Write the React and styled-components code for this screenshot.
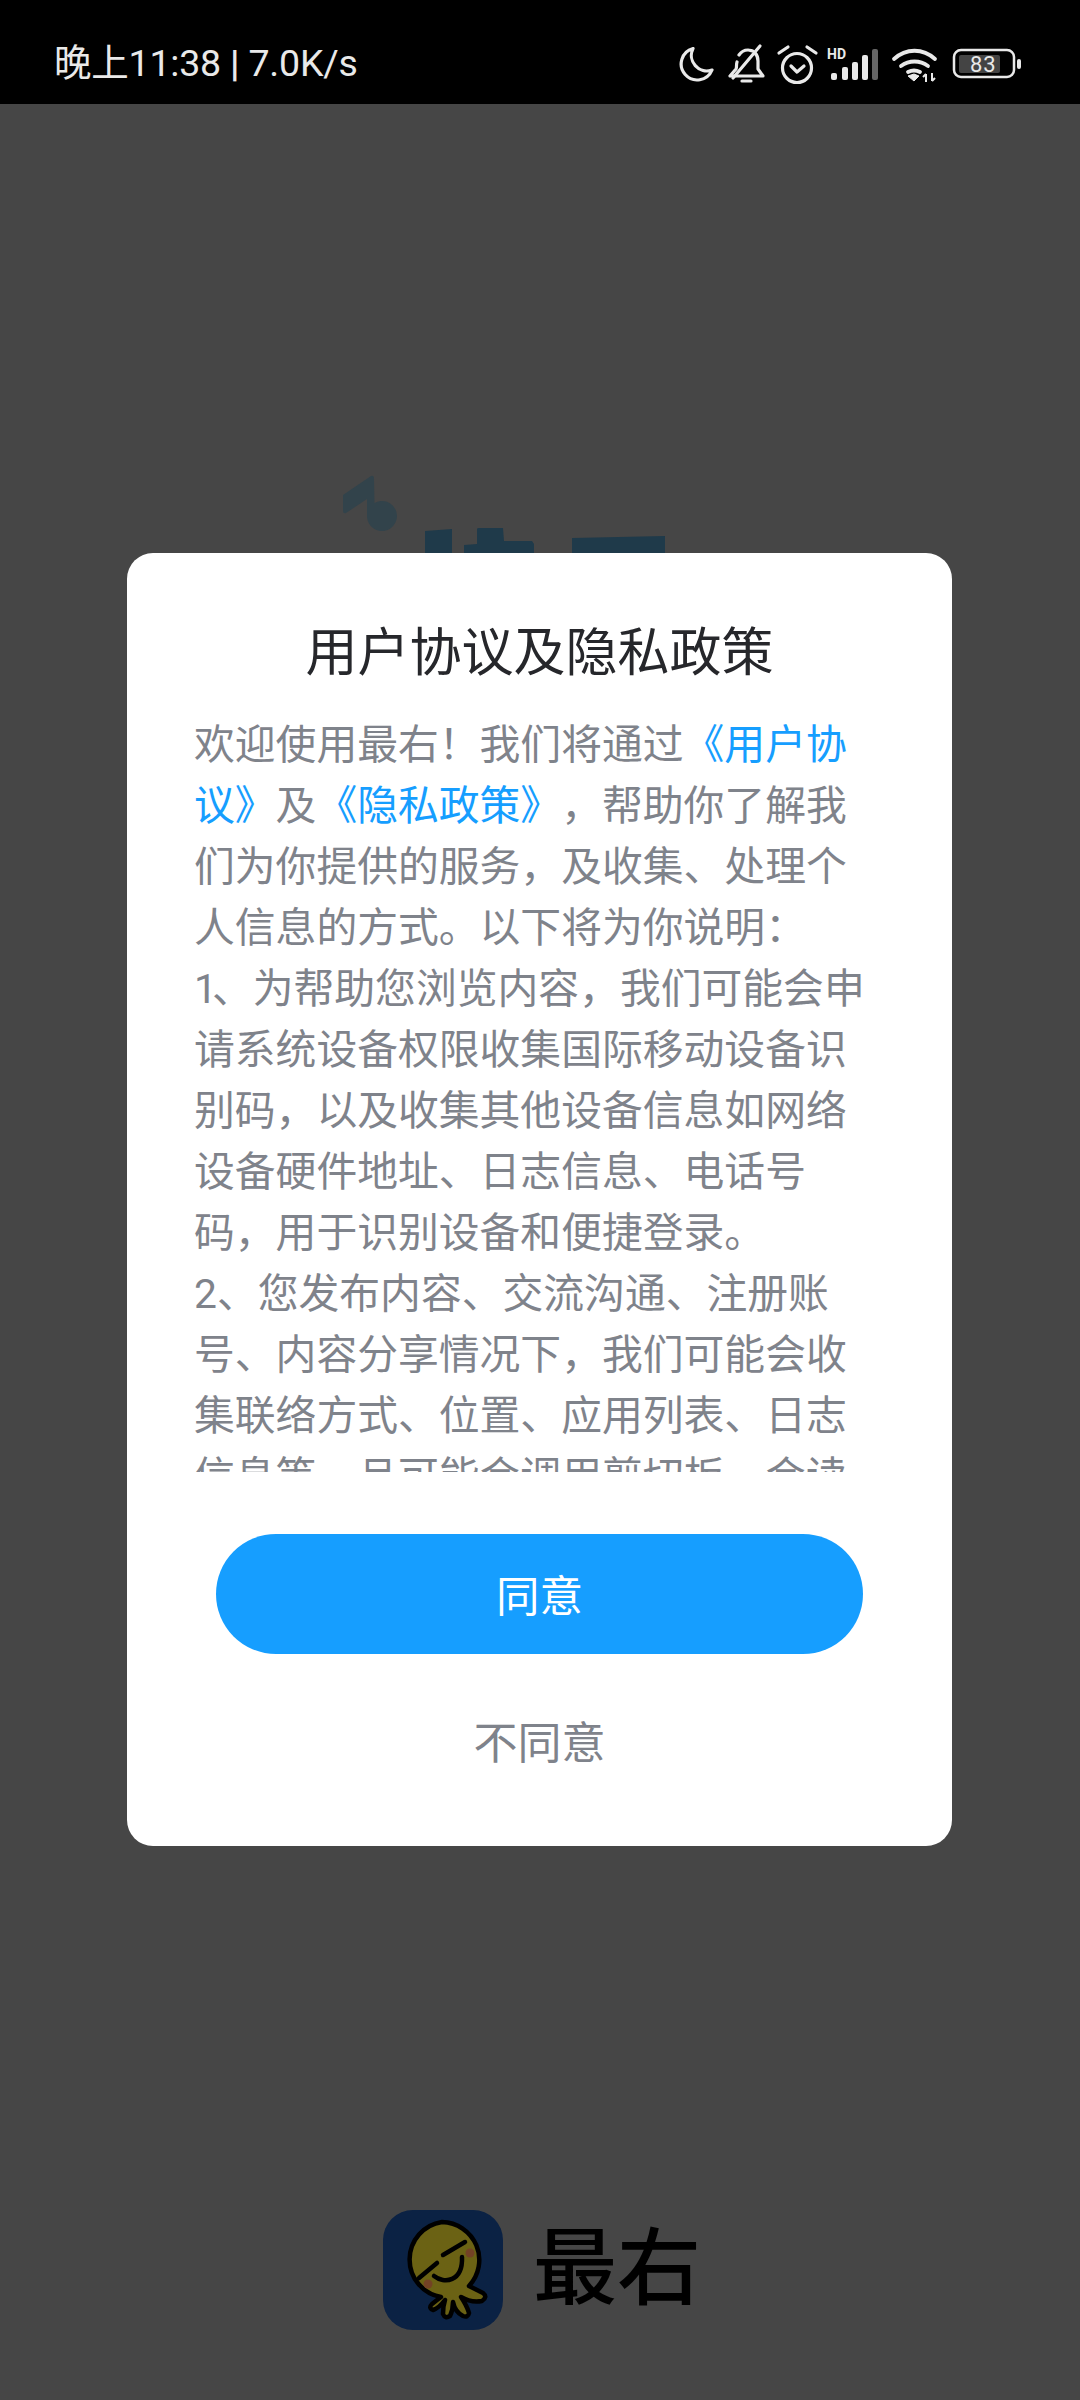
import React from "react";
import styled, { createGlobalStyle } from "styled-components";

const Global = createGlobalStyle`
  html, body { margin: 0; padding: 0; background: #464646; }
  * { box-sizing: border-box; }
`;
const FONT = `Roboto, "Noto Sans CJK SC", "Noto Sans", sans-serif`;

const Screen = styled.div`
  position: relative; width: 1080px; height: 2400px; overflow: hidden;
  background: #464646; font-family: ${FONT};
  display: flex; flex-direction: column;
`;
const StatusBar = styled.header`
  height: 104px; background: #000; color: #e9e9e9; flex: none;
  display: flex; align-items: center; justify-content: space-between;
  padding: 22px 58px 0 54px;
`;
const StatusText = styled.span`font-size: 37.5px; line-height: 44px; letter-spacing: -0.2px; white-space: nowrap;`;
const Divider = styled.span`font-weight: 700;`;
const StatusIcons = styled.svg`display: block; flex: none;`;
const Splash = styled.main`
  flex: 1; display: flex; flex-direction: column; align-items: center;
  justify-content: space-between; padding: 366px 0 70px;
`;
const HiddenLogo = styled.svg`display: block; margin-left: -70px;`;
const Brand = styled.div`display: flex; align-items: center; gap: 30px; margin-left: 4px;`;
const BrandName = styled.span`
  font-size: 84px; line-height: 120px; font-weight: 500; color: #000;
`;
const Overlay = styled.div`
  position: absolute; left: 127px; top: 553px; width: 825px; height: 1293px;
  background: #fff; border-radius: 26px; display: flex; flex-direction: column; align-items: center;
`;
const Title = styled.h1`
  margin: 66px 0 0; font-size: 52px; line-height: 70px; font-weight: 400; color: #26272b; white-space: nowrap;
`;
const Terms = styled.div`
  margin-top: 26px; width: 825px; height: 757px; padding-left: 67px; overflow: hidden;
  font-size: 40.8px; line-height: 61px; color: #7f838b; text-spacing-trim: space-all;
`;
const TermLine = styled.div`white-space: nowrap;`;
const TermLink = styled.span`color: #169eff;`;
const NarrowDigit = styled.span`letter-spacing: -5px;`;
const Agree = styled.button`
  margin-top: 62px; width: 647px; height: 120px; flex: none; border: 0; border-radius: 60px;
  background: #169eff; color: #fff; font: 400 43.5px ${FONT}; padding: 0 0 2px;
`;
const Decline = styled.button`
  margin-top: 60px; border: 0; padding: 0; background: none; color: #7f838b;
  font: 400 44px/60px ${FONT};
`;

const lines = [
  <>欢迎使用最右！我们将通过<TermLink>《用户协</TermLink></>,
  <><TermLink>议》</TermLink>及<TermLink>《隐私政策》</TermLink>，帮助你了解我</>,
  "们为你提供的服务，及收集、处理个",
  "人信息的方式。以下将为你说明：",
  <><NarrowDigit>1</NarrowDigit>、为帮助您浏览内容，我们可能会申</>,
  "请系统设备权限收集国际移动设备识",
  "别码，以及收集其他设备信息如网络",
  "设备硬件地址、日志信息、电话号",
  "码，用于识别设备和便捷登录。",
  "2、您发布内容、交流沟通、注册账",
  "号、内容分享情况下，我们可能会收",
  "集联络方式、位置、应用列表、日志",
  "信息等，且可能会调用剪切板，会读",
];

function Icons() {
  const s = "#e9e9e9";
  return (
    <StatusIcons width="344" height="44" viewBox="0 0 344 44" fill="none">
      <path d="M15 7.500A16 16 0 1 0 34 29 15.500 15.500 0 0 1 15 7.500Z" stroke={s} strokeWidth="3.200" strokeLinejoin="round" />
      <g stroke={s} strokeWidth="3.200" strokeLinecap="round" strokeLinejoin="round">
        <path d="M52 35h33l-5-7v-8c0-3-1-6-3-8M59 21c-1 3 0 5-1 7l-6 7M61 14c2-3 5-5 9-5 2 0 4 1 5 1" />
        <path d="M55 37 82 5" />
        <path d="M64 40h9" />
        <circle cx="119" cy="27" r="14.500" />
        <path d="M113 25l6 6 7-6" />
        <path d="M101 12l9-6M138 12l-9-6" />
      </g>
      <text x="149" y="18" fill={s} fontSize="14" fontWeight="700" fontFamily="Roboto, sans-serif">HD</text>
      <g fill={s}>
        <rect x="153" y="32" width="6" height="7" rx="2" />
        <rect x="164" y="26" width="6" height="13" rx="2" />
        <rect x="174" y="21" width="6" height="18" rx="2" />
        <rect x="184" y="14" width="6" height="25" rx="2" />
        <rect x="194" y="8" width="6" height="31" rx="2" fill="#666" />
      </g>
      <g stroke={s} strokeWidth="3.800" strokeLinecap="round" fill="none">
        <path d="M216 18c12-11 29-11 41 0" />
        <path d="M223 25c8-6 19-6 27 0" />
        <path d="M230 31c4-2 8-2 12 0" />
      </g>
      <path d="M230 35l6-2 5 2-5 5Z" fill={s} stroke={s} strokeWidth="1" strokeLinejoin="round" />
      <path d="M248 33v8M245 36l3-3M254 32v8M254 40l3-3" stroke={s} strokeWidth="2" />
      <rect x="276" y="9" width="60" height="27" rx="7" stroke={s} strokeWidth="2.500" />
      <rect x="281" y="14" width="41" height="18" rx="2" fill="#444" />
      <text x="292" y="31" fill={s} fontSize="22" letterSpacing="1" fontFamily="Roboto, sans-serif">83</text>
      <rect x="339" y="18" width="4" height="10" rx="2" fill={s} />
    </StatusIcons>
  );
}

function BrandIcon() {
  return (
    <svg width="120" height="120" viewBox="0 0 120 120" style={{ display: "block" }}>
      <rect width="120" height="120" rx="30" fill="#0b2244" />
      <path d="M59 12A38 38 0 0 1 86 76L100 83Q105 87 99 91Q88 93 78 87Q84 96 86 103Q85 108 80 106Q72 102 70 92Q70 100 67 106Q62 109 60 104Q60 96 62 90Q56 98 50 100Q45 98 49 94Q54 90 58 87A38 38 0 0 1 59 12Z" fill="#6b6214" stroke="#000" strokeWidth="4.500" strokeLinejoin="round" />
      <path d="M60 45 82 32M36 68 54 53" stroke="#000" strokeWidth="4.500" strokeLinecap="round" fill="none" />
      <path d="M51 66c10 8 29 6 28-19" stroke="#000" strokeWidth="4.500" strokeLinecap="round" fill="none" />
      <circle cx="87" cy="43" r="4.500" fill="#734225" />
      <circle cx="45" cy="74" r="4.500" fill="#734225" />
    </svg>
  );
}

export default function App() {
  return (
    <Screen>
      <Global />
      <StatusBar>
        <StatusText>晚上11:38 <Divider>|</Divider> 7.0K/s</StatusText>
        <Icons />
      </StatusBar>
      <Splash>
        <HiddenLogo width="330" height="83" viewBox="0 0 330 83">
          <path d="M3 25 31 6Q34 5 34 9L34.500 33A15 15 0 1 1 27 47L27 29 6 43Q3 44 3 41Z" fill="#32434b" />
          <g fill="#1f3a4a">
            <path d="M85 61 112 59V83H85Z" />
            <path d="M137 59Q137 58 139 58L163 58 164 71 192 71 194 74V83H124V75L137 74Z" />
            <path d="M232 68 325 66V83H232Z" />
          </g>
        </HiddenLogo>
        <Brand>
          <BrandIcon />
          <BrandName>最右</BrandName>
        </Brand>
      </Splash>
      <Overlay>
        <Title>用户协议及隐私政策</Title>
        <Terms>
          {lines.map((l, i) => <TermLine key={i}>{l}</TermLine>)}
        </Terms>
        <Agree>同意</Agree>
        <Decline>不同意</Decline>
      </Overlay>
    </Screen>
  );
}
